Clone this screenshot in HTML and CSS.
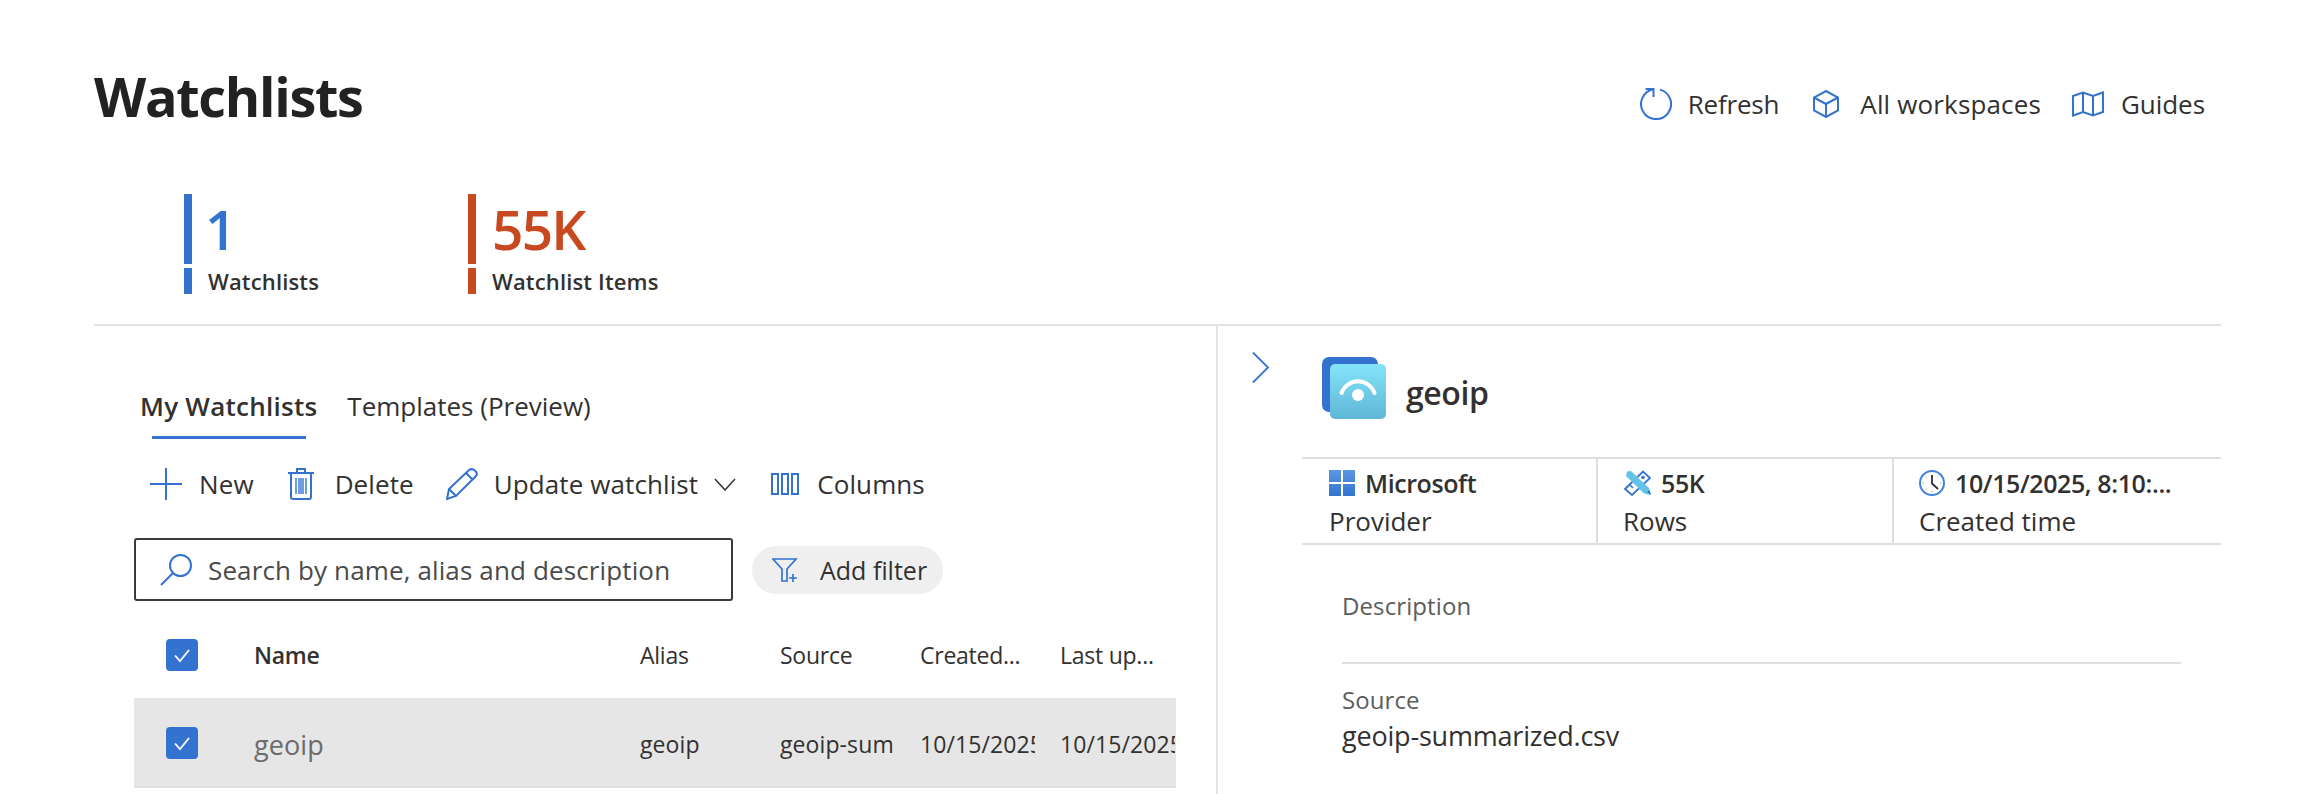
FILE: index.html
```html
<!DOCTYPE html>
<html lang="en">
<head>
<meta charset="utf-8">
<title>Watchlists</title>
<link rel="stylesheet" href="styles.css">
</head>
<body>
<div class="page">
  <header class="header">
    <h1 class="title">Watchlists</h1>
    <nav class="header-actions">
      <span class="action action-refresh">
        <svg class="icon" width="32" height="32" viewBox="0 0 32 32" fill="none" stroke="#3373cf" stroke-width="2"><path d="M20 1.6A15 15 0 1 1 13.5 1.3"/><path d="M5.5 1H13.5V9"/></svg>
        Refresh
      </span>
      <span class="action action-cube">
        <svg class="icon" width="26" height="28" viewBox="0 0 26 28" fill="none" stroke="#3373cf" stroke-width="2"><path d="M13 1L25 7.5V20.5L13 27L1 20.5V7.5Z"/><path d="M1 7.5L13 14L25 7.5M13 14V27"/></svg>
        All workspaces
      </span>
      <span class="action">
        <svg class="icon" width="32" height="26" viewBox="0 0 32 26" fill="none" stroke="#3373cf" stroke-width="2"><path d="M1 5L11 1.5L21 5L31 1.5V21L21 24.5L11 21L1 24.5Z"/><path d="M11 1.5V21M21 5V24.5"/></svg>
        Guides
      </span>
    </nav>
  </header>

  <section class="stats">
    <div class="stat stat-blue">
      <div class="stat-value">1</div>
      <div class="stat-label">Watchlists</div>
    </div>
    <div class="stat stat-orange">
      <div class="stat-value">55K</div>
      <div class="stat-label">Watchlist Items</div>
    </div>
  </section>

  <main class="split">
    <section class="list-pane">
      <div class="tabs">
        <span class="tab tab-active">My Watchlists</span>
        <span class="tab">Templates (Preview)</span>
      </div>
      <div class="toolbar">
        <span class="tool tool-new">
          <svg width="32" height="32" viewBox="0 0 32 32" fill="none" stroke="#3373cf" stroke-width="2"><path d="M16 0V32M0 16H32"/></svg>
          New
        </span>
        <span class="tool tool-delete">
          <svg width="26" height="32" viewBox="0 0 26 32" fill="none" stroke="#3373cf" stroke-width="2"><path d="M0 5H26M9 5V1H17V5M3 5V29Q3 31 5 31H21Q23 31 23 29V5"/><path stroke-width="1.4" d="M8 10V26M11 10V26M13 10V26M15 10V26M18 10V26"/></svg>
          Delete
        </span>
        <span class="tool tool-update">
          <svg width="32" height="32" viewBox="0 0 32 32" fill="none" stroke="#3373cf" stroke-width="2"><path d="M1 31L3 21L23 2Q26 0 29 2.500Q32 5.500 30 8L10 28Z"/><path d="M3 21L10 28M20 5L27 12"/></svg>
          Update watchlist
          <svg class="chevron" width="22" height="13" viewBox="0 0 22 13" fill="none" stroke="#323130" stroke-width="1.500"><path d="M1 1L11 12L21 1"/></svg>
        </span>
        <span class="tool tool-columns">
          <svg width="28" height="22" viewBox="0 0 28 22" fill="none" stroke="#3373cf" stroke-width="2"><path d="M1 1H7V21H1ZM11 1H17V21H11ZM21 1H27V21H21Z"/></svg>
          Columns
        </span>
      </div>
      <div class="filters">
        <div class="search">
          <svg width="32" height="32" viewBox="0 0 32 32" fill="none" stroke="#3373cf" stroke-width="2"><circle cx="20.500" cy="11.500" r="10.500"/><path d="M13 19L1 31"/></svg>
          <span class="search-text">Search by name, alias and description</span>
        </div>
        <div class="add-filter">
          <svg width="26" height="24" viewBox="0 0 26 24" fill="none" stroke="#3373cf" stroke-width="1.700"><path d="M1 1H24L15 11V23H10V11Z"/><path d="M17 20H25M21 16V24"/></svg>
          Add filter
        </div>
      </div>
      <div class="grid grid-head">
        <span class="cell-check"><svg class="check" width="32" height="32" viewBox="0 0 32 32"><rect width="32" height="32" rx="4" fill="#3373cf"/><path d="M9 16.500L14 22L23 11" fill="none" stroke="#fff" stroke-width="1.800"/></svg></span>
        <span class="cell-name-head">Name</span>
        <span class="cell">Alias</span>
        <span class="cell">Source</span>
        <span class="cell">Created...</span>
        <span class="cell">Last up...</span>
      </div>
      <div class="grid grid-row">
        <span class="cell-check"><svg class="check" width="32" height="32" viewBox="0 0 32 32"><rect width="32" height="32" rx="4" fill="#3373cf"/><path d="M9 16.500L14 22L23 11" fill="none" stroke="#fff" stroke-width="1.800"/></svg></span>
        <span class="cell-name">geoip</span>
        <span class="cell">geoip</span>
        <span class="cell">geoip-sum</span>
        <span class="cell">10/15/2025</span>
        <span class="cell">10/15/2025</span>
      </div>
    </section>

    <aside class="detail-pane">
      <div class="detail-head">
        <svg class="collapse" width="17" height="31" viewBox="0 0 17 31" fill="none" stroke="#3373cf" stroke-width="1.800"><path d="M1 0.500L16 15.500L1 30.500"/></svg>
        <svg class="logo" width="64" height="62" viewBox="0 0 64 62">
          <defs><linearGradient id="logoFace" x1="0" y1="0" x2="0" y2="1"><stop offset="0" stop-color="#84e4fb"/><stop offset="1" stop-color="#5fb6d6"/></linearGradient></defs>
          <rect x="0" y="0" width="56" height="55" rx="7" fill="#3373cf"/>
          <rect x="8" y="7" width="56" height="55" rx="5" fill="url(#logoFace)"/>
          <path d="M19.500 36A17.500 17.500 0 0 1 52.500 36" fill="none" stroke="#fff" stroke-width="4" stroke-linecap="round"/>
          <circle cx="36" cy="38" r="6" fill="#fff"/>
        </svg>
        <h2 class="detail-title">geoip</h2>
      </div>
      <div class="facts">
        <div class="fact fact-provider">
          <div class="fact-value">
            <svg width="26" height="26" viewBox="0 0 26 26"><defs><linearGradient id="winFill" x1="0" y1="0" x2="0" y2="1"><stop offset="0" stop-color="#5c97e3"/><stop offset="1" stop-color="#3373cf"/></linearGradient></defs><path fill="url(#winFill)" d="M0 0H12V12H0ZM14 0H26V12H14ZM0 14H12V26H0ZM14 14H26V26H14Z"/></svg>
            Microsoft
          </div>
          <div class="fact-label">Provider</div>
        </div>
        <div class="fact fact-rows">
          <div class="fact-value">
            <svg width="28" height="26" viewBox="0 0 28 26" fill="none"><path d="M2 19L20 1.500L27 8L9 25Z" fill="#fff" stroke="#3373cf" stroke-width="1.800"/><path d="M7 15L10 18M11 11L14 14" stroke="#3373cf" stroke-width="1.500"/><circle cx="20" cy="7.500" r="1.800" fill="#3373cf"/><path d="M4 1.500L8 1L26 18L28 25L21 23.500L3 6Z" fill="#63c4e6"/><path d="M24 22L28 25L26.500 20Z" fill="#3373cf"/></svg>
            55K
          </div>
          <div class="fact-label">Rows</div>
        </div>
        <div class="fact fact-time">
          <div class="fact-value">
            <svg width="26" height="26" viewBox="0 0 26 26" fill="none"><circle cx="13" cy="13" r="12" fill="#fff" stroke="#3f83dc" stroke-width="2"/><path d="M13 5V13.500L19 19" stroke="#323130" stroke-width="1.800"/><path d="M21 13H22.500M3.500 13H5M6.500 6.500L7.500 7.500M18.500 6.500L19.500 5.500M6.500 19.500L7.500 18.500M13 21V22.500" stroke="#a9a9a9"/></svg>
            10/15/2025, 8:10:...
          </div>
          <div class="fact-label">Created time</div>
        </div>
      </div>
      <div class="props">
        <div class="prop-label">Description</div>
        <div class="prop-rule"></div>
        <div class="prop-label prop-source">Source</div>
        <div class="prop-value">geoip-summarized.csv</div>
      </div>
    </aside>
  </main>
</div>
</body>
</html>
```

FILE: styles.css
```css
* { box-sizing: border-box; }
html, body { margin: 0; padding: 0; background: #fff; }
body { font-family: "Open Sans", "Liberation Sans", sans-serif; color: #323130; overflow: hidden; }
svg { display: block; flex: none; }

.page { width: 2308px; height: 794px; padding: 0 87px 0 94px; overflow: hidden; }

.header { display: flex; justify-content: space-between; align-items: flex-start; height: 194px; }
.title { margin: 62px 0 0; font-size: 54px; line-height: 68px; font-weight: 700; color: #222; letter-spacing: -1.3px; }
.header-actions { display: flex; margin: 88px 16px 0 0; gap: 31px; }
.action { display: flex; align-items: center; gap: 17px; height: 32px; font-size: 26px; letter-spacing: -0.05px; }
.action-refresh { gap: 16px; letter-spacing: -0.2px; }
.action-cube { margin-left: 3px; gap: 21px; letter-spacing: 0.15px; }

.stats { display: flex; height: 132px; padding-left: 90px; border-bottom: 2px solid #e3e3e3; }
.stat { width: 284px; }
.stat-value, .stat-label { border-left: 8px solid; padding-left: 16px; color: #323130; }
.stat-value { height: 70px; margin-bottom: 4px; font-size: 55px; line-height: 70px; font-weight: 600; letter-spacing: -1.8px; }
.stat-label { height: 26px; font-size: 22px; line-height: 26px; font-weight: 600; letter-spacing: 0.15px; }
.stat-blue .stat-value { color: #3373cf; padding-left: 13px; }
.stat-blue .stat-value, .stat-blue .stat-label { border-color: #3373cf; }
.stat-orange .stat-value { color: #c8481f; }
.stat-orange .stat-value, .stat-orange .stat-label { border-color: #c8481f; }

.split { display: flex; height: 468px; }
.list-pane { width: 1124px; padding: 57px 0 0 40px; border-right: 2px solid #e3e3e3; }

.tabs { display: flex; gap: 30px; height: 59px; padding-left: 6px; }
.tab { height: 56px; font-size: 26px; line-height: 46px; position: relative; }
.tab-active { font-weight: 600; letter-spacing: 0.25px; }
.tab-active::after { content: ""; position: absolute; left: 12px; right: 11px; top: 53px; height: 3px; background: #3373cf; }

.toolbar { display: flex; align-items: center; height: 32px; margin: 26px 0 0 16px; font-size: 26px; letter-spacing: 0.1px; }
.tool { display: flex; align-items: center; gap: 18px; height: 32px; white-space: nowrap; }
.tool-new { gap: 17px; }
.tool-delete { margin-left: 34px; gap: 21px; }
.tool-update { margin-left: 32px; gap: 16px; }
.tool-columns { margin-left: 35px; gap: 18px; }

.filters { display: flex; align-items: center; gap: 19px; margin-top: 38px; }
.search { display: flex; align-items: center; gap: 16px; width: 599px; height: 63px; padding-left: 24px; border: 2px solid #3b3a39; border-radius: 3px; font-size: 26px; letter-spacing: 0.13px; color: #4a4a4a; }
.add-filter { display: flex; align-items: center; gap: 22px; width: 191px; height: 48px; padding-left: 20px; border-radius: 24px; background: #efefef; font-size: 25px; }

.grid { display: grid; grid-template-columns: 120px 386px 140px 140px 140px 116px; align-items: center; width: 1042px; font-size: 23px; letter-spacing: -0.25px; }
.cell-check { padding-left: 32px; }
.grid-head { height: 97px; padding-top: 10px; }
.cell-name-head { font-weight: 600; }
.cell { display: block; width: 115px; overflow: hidden; white-space: nowrap; }
.grid-row { height: 90px; padding-top: 4px; background: #e6e6e6; border-bottom: 2px solid #e0e0e0; letter-spacing: 0.1px; }
.grid-row .check { margin-top: -2px; }
.cell-name { font-size: 27px; color: #6b6b6b; }

.detail-pane { flex: 1; padding-left: 84px; }
.detail-head { display: flex; align-items: center; height: 131px; position: relative; }
.collapse { position: absolute; left: -50px; top: 26px; }
.logo { margin: -7px 0 0 20px; }
.detail-title { margin: 2px 0 0 20px; font-size: 32px; font-weight: 600; color: #323130; letter-spacing: -0.4px; }

.facts { display: grid; grid-template-columns: 294px 296px 1fr; height: 88px; border-top: 2px solid #dedede; border-bottom: 2px solid #dedede; }
.fact { padding: 10px 0 0 27px; border-left: 2px solid #dedede; font-size: 26px; }
.fact-provider { border-left: 0; }
.fact-rows { padding-left: 25px; }
.fact-time { padding-left: 25px; }
.fact-value { display: flex; align-items: center; gap: 10px; height: 28px; font-size: 25px; font-weight: 600; letter-spacing: -0.4px; white-space: nowrap; }
.fact-label { margin-top: 6px; line-height: 36px; }

.props { padding: 44px 40px 0 40px; }
.prop-label { font-size: 24px; line-height: 34px; color: #5c5c5c; letter-spacing: 0.1px; }
.prop-rule { height: 2px; margin-top: 39px; background: #e0e0e0; }
.prop-source { margin-top: 19px; }
.prop-value { font-size: 27px; line-height: 38px; letter-spacing: -0.2px; }
```
